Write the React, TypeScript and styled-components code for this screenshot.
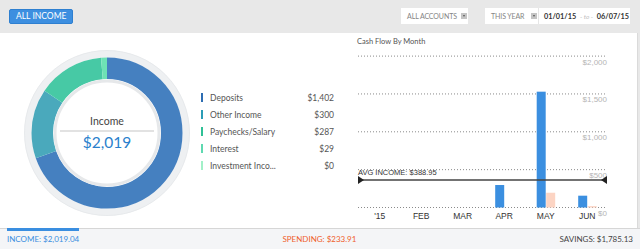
import React from 'react'
import styled, { createGlobalStyle } from 'styled-components'

const GlobalStyle = createGlobalStyle`
	html, body {
		margin: 0;
		padding: 0;
		background: #e8e8e8;
	}
	* {
		box-sizing: border-box;
	}
`

const SEGMENTS = [
	{ label: 'Deposits', amount: 1402, ring: '#4580c0', bar: '#2d6db2' },
	{ label: 'Other Income', amount: 300, ring: '#4aa9bc', bar: '#2b9db6' },
	{ label: 'Paychecks/Salary', amount: 287, ring: '#47c9a5', bar: '#2fc096' },
	{ label: 'Interest', amount: 29, ring: '#6ee2b5', bar: '#5ed9b0' },
	{ label: 'Investment Inco...', amount: 0, ring: '#a2f0c8', bar: '#a2f0c8' }
]

const MONTHS = [
	{ label: "'15", income: 0, spending: 0 },
	{ label: 'FEB', income: 0, spending: 0 },
	{ label: 'MAR', income: 0, spending: 0 },
	{ label: 'APR', income: 297, spending: 0 },
	{ label: 'MAY', income: 1530, spending: 195 },
	{ label: 'JUN', income: 156, spending: 18 }
]

const GRID = [2000, 1500, 1000, 500, 0]

// chart geometry, svg coords (svg sits at page x=350, y=48)
const ZERO_Y = 159.5
const SCALE = 0.0757
const LEFT_X = 8
const RIGHT_X = 257
const yFor = (v: number): number => ZERO_Y - v * SCALE

const Donut = (): JSX.Element => {
	const total = SEGMENTS.reduce((s, x) => s + x.amount, 0)
	const r = 64.75
	const c = 2 * Math.PI * r
	let offset = 0
	return (
		<DonutWrap>
			<svg width="170" height="170" viewBox="0 0 170 170">
				<circle cx="85" cy="85" r="79" fill="none" stroke="#eef0f2" strokeWidth="7.5" />
				<circle cx="85" cy="85" r="82.5" fill="none" stroke="#e4e7ea" strokeWidth="0.8" />
				<g transform="rotate(-90 85 85)">
					{SEGMENTS.map((s) => {
						const len = (s.amount / total) * c
						const el = (
							<circle
								key={s.label}
								cx="85"
								cy="85"
								r={r}
								fill="none"
								stroke={s.ring}
								strokeWidth="21.5"
								strokeDasharray={`${len} ${c - len}`}
								strokeDashoffset={-offset}
							/>
						)
						offset += len
						return el
					})}
				</g>
				<circle cx="85" cy="85" r="52" fill="#fff" stroke="#e6e8ea" strokeWidth="3" />
			</svg>
			<CenterLabel>
				<CenterTitle>Income</CenterTitle>
				<CenterRule />
				<CenterValue>$2,019</CenterValue>
			</CenterLabel>
		</DonutWrap>
	)
}

const Chart = (): JSX.Element => {
	const step = 41.5
	const firstX = 29.7
	return (
		<ChartSvg width="287" height="178" viewBox="0 0 287 178">
			{GRID.map((v) => (
				<g key={v}>
					<line
						x1={LEFT_X}
						x2={RIGHT_X}
						y1={yFor(v)}
						y2={yFor(v)}
						stroke="#8a8a8a"
						strokeWidth="1"
						strokeDasharray="1 2"
					/>
					<text x={RIGHT_X} y={yFor(v) + 8.5} textAnchor="end" fontSize="8" fill="#b5b5b5">
						{v === 0 ? '$0' : '$' + v.toLocaleString('en-US')}
					</text>
				</g>
			))}
			{MONTHS.map((m, i) => {
				const cx = firstX + i * step
				return (
					<g key={m.label}>
						{m.income > 0 && (
							<rect x={cx - 9} y={yFor(m.income)} width="9" height={m.income * SCALE} fill="#3b8fe0" />
						)}
						{m.spending > 0 && (
							<rect x={cx + 0.5} y={yFor(m.spending)} width="9" height={m.spending * SCALE} fill="#fcd4c3" />
						)}
						<text x={cx} y={170.5} textAnchor="middle" fontSize="8.5" fill="#333">
							{m.label}
						</text>
					</g>
				)
			})}
			<line x1={LEFT_X} x2={RIGHT_X} y1="132" y2="132" stroke="#444" strokeWidth="1.3" />
			<polygon points={`${LEFT_X},128 ${LEFT_X},136 ${LEFT_X + 6},132`} fill="#222" />
			<polygon points={`${RIGHT_X},128 ${RIGHT_X},136 ${RIGHT_X - 6},132`} fill="#222" />
			<text x={LEFT_X} y="127" fontSize="7.5" fill="#333">
				AVG INCOME: $388.95
			</text>
		</ChartSvg>
	)
}

const App = (): JSX.Element => {
	return (
		<Page>
			<GlobalStyle />
			<Header>
				<PrimaryButton>ALL INCOME</PrimaryButton>
				<Controls>
					<Select width={67}>
						ALL ACCOUNTS
						<Caret />
					</Select>
					<DateGroup>
						<Select width={53}>
							THIS YEAR
							<Caret />
						</Select>
						<DateRange>
							<DateValue>01/01/15</DateValue>
							<DateSep>- to -</DateSep>
							<DateValue>06/07/15</DateValue>
						</DateRange>
					</DateGroup>
				</Controls>
			</Header>
			<Body>
				<LeftPane>
					<Donut />
					<Legend>
						{SEGMENTS.map((s) => (
							<LegendRow key={s.label}>
								<Swatch color={s.bar} />
								<LegendLabel>{s.label}</LegendLabel>
								<LegendAmount>${s.amount.toLocaleString('en-US')}</LegendAmount>
							</LegendRow>
						))}
					</Legend>
				</LeftPane>
				<ChartPane>
					<ChartTitle>Cash Flow By Month</ChartTitle>
					<Chart />
				</ChartPane>
			</Body>
			<Footer>
				<FooterItem tone="#3a8ee0" active>
					INCOME: $2,019.04
				</FooterItem>
				<FooterItem tone="#f0602c">SPENDING: $233.91</FooterItem>
				<FooterItem tone="#444">SAVINGS: $1,785.13</FooterItem>
			</Footer>
		</Page>
	)
}

export default App

const Page = styled.div`
	width: 640px;
	height: 249px;
	display: flex;
	flex-direction: column;
	background: #e8e8e8;
	font-family: Lato, 'Liberation Sans', sans-serif;
	overflow: hidden;
`

const Header = styled.div`
	height: 33px;
	flex-shrink: 0;
	display: flex;
	align-items: center;
	justify-content: space-between;
	padding: 0 10px 1px 9px;
`

const PrimaryButton = styled.button`
	height: 15px;
	padding: 0 6px;
	background: #3d8fe0;
	border: 1px solid #2e7fd0;
	border-radius: 2px;
	color: #fff;
	font-family: Lato, sans-serif;
	font-size: 8.5px;
	line-height: 13px;
`

const Controls = styled.div`
	display: flex;
	align-items: center;
	gap: 17px;
`

const DateGroup = styled.div`
	display: flex;
	align-items: center;
`

const Select = styled.div<{ width: number }>`
	width: ${(p) => p.width}px;
	height: 16px;
	display: flex;
	align-items: center;
	justify-content: space-between;
	padding: 0 1px 0 6px;
	background: #fff;
	color: #858585;
	font-size: 7px;
	letter-spacing: -0.1px;
`

const Caret = styled.span`
	width: 6px;
	height: 6px;
	background: #c4c4c4;
	position: relative;
	&::after {
		content: '';
		position: absolute;
		left: 1.5px;
		top: 2px;
		border-left: 1.5px solid transparent;
		border-right: 1.5px solid transparent;
		border-top: 2px solid #555;
	}
`

const DateRange = styled.div`
	width: 92px;
	height: 16px;
	display: flex;
	align-items: center;
	justify-content: space-between;
	padding: 0 1px 0 5px;
	background: #fff;
	border-left: 1px solid #e6e6e6;
	font-size: 7.3px;
`

const DateValue = styled.span`
	color: #333;
	font-weight: 700;
`

const DateSep = styled.span`
	color: #c0c0c0;
	font-style: italic;
	font-size: 6.5px;
`

const Body = styled.div`
	height: 195px;
	flex-shrink: 0;
	display: flex;
	background: #fff;
	margin-right: 2px;
	border-right: 1px solid #dadada;
`

const LeftPane = styled.div`
	width: 350px;
	display: flex;
	align-items: flex-start;
	padding: 15px 0 0 22px;
`

const DonutWrap = styled.div`
	position: relative;
	width: 170px;
	height: 170px;
	svg {
		display: block;
	}
`

const CenterLabel = styled.div`
	position: absolute;
	left: 39px;
	top: 66px;
	width: 92px;
	display: flex;
	flex-direction: column;
	align-items: center;
`

const CenterTitle = styled.div`
	font-size: 10.5px;
	color: #444;
	line-height: 14px;
`

const CenterRule = styled.div`
	width: 94px;
	height: 2px;
	background: #e2e2e2;
	margin: 2px 0 1px;
`

const CenterValue = styled.div`
	font-size: 15.5px;
	color: #2a80cc;
	line-height: 19px;
`

const Legend = styled.div`
	width: 133px;
	margin: 41px 0 0 9px;
	display: flex;
	flex-direction: column;
`

const LegendRow = styled.div`
	height: 17px;
	display: flex;
	align-items: center;
	font-size: 8.5px;
	color: #555;
`

const Swatch = styled.span<{ color: string }>`
	width: 2px;
	height: 9px;
	background: ${(p) => p.color};
	margin-right: 7px;
`

const LegendLabel = styled.span`
	flex: 1;
`

const LegendAmount = styled.span`
	text-align: right;
`

const ChartPane = styled.div`
	flex: 1;
	display: flex;
	flex-direction: column;
	padding: 4px 0 0;
`

const ChartTitle = styled.div`
	font-size: 7.5px;
	color: #555;
	line-height: 10px;
	padding-left: 7px;
`

const ChartSvg = styled.svg`
	display: block;
	margin-top: 1px;
	font-family: 'Liberation Sans', Arial, sans-serif;
`

const Footer = styled.div`
	flex: 1;
	display: flex;
	align-items: center;
	justify-content: space-between;
	padding: 0 7px;
	background: #f4f5f7;
	border-top: 1px solid #d6d6d6;
`

const FooterItem = styled.div<{ tone: string; active?: boolean }>`
	position: relative;
	height: 100%;
	display: flex;
	align-items: center;
	font-size: 8px;
	color: ${(p) => p.tone};
	&::before {
		content: '';
		display: ${(p) => (p.active ? 'block' : 'none')};
		position: absolute;
		left: 0;
		right: 0;
		top: -1px;
		height: 3px;
		background: #3a8ee0;
	}
`
